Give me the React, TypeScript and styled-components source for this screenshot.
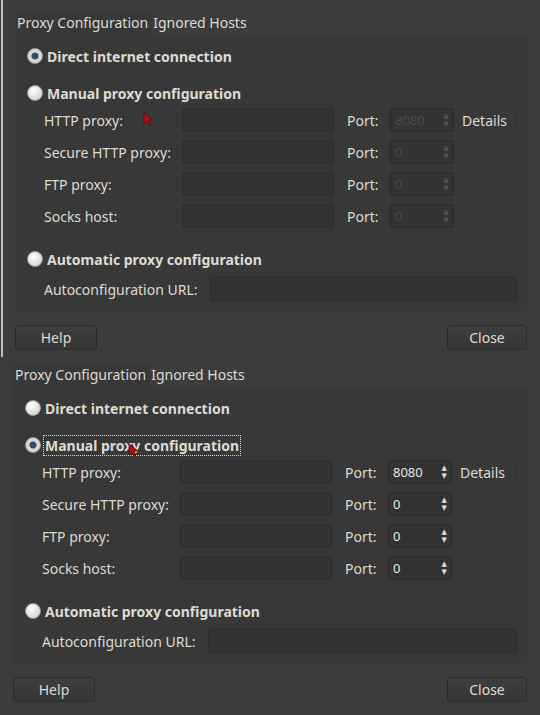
import React from "react";
import styled, { createGlobalStyle } from "styled-components";

const Global = createGlobalStyle`
  html, body { margin: 0; background: #3c3c3c; }
  body { font-family: "Noto Sans", "DejaVu Sans", sans-serif; font-size: 14px; color: #dfdbd2; }
`;

const Page = styled.div`
  width: 540px;
  height: 715px;
  display: flex;
  flex-direction: column;
  overflow: hidden;
`;

const Dialog = styled.div<{ shift: number; top: number; edge?: boolean }>`
  height: 357px;
  box-sizing: border-box;
  padding: ${(p) => p.top}px 13px 0 ${(p) => 15 + p.shift}px;
  border-left: ${(p) => (p.edge ? "2px solid #bdbdbd" : "none")};
  margin-left: ${(p) => (p.edge ? 1 : 0)}px;
  display: flex;
  flex-direction: column;
  background: #3c3c3c;
  & + & { height: 358px; }
`;

const Tabs = styled.div`
  display: flex;
  height: 23px;
`;

const Tab = styled.div<{ active?: boolean }>`
  padding: 0 3px 0 2px;
  line-height: 22px;
  background: ${(p) => (p.active ? "#383838" : "transparent")};
  border-radius: 3px 3px 0 0;
  white-space: nowrap;
`;

const Panel = styled.div`
  background: #383838;
  height: 276px;
  box-sizing: border-box;
  padding: 10px 10px 0 12px;
  display: flex;
  flex-direction: column;
`;

const Option = styled.div<{ gapTop: number; focus?: boolean }>`
  display: flex;
  align-items: center;
  gap: 3px;
  margin-top: ${(p) => p.gapTop}px;
  height: 22px;
  font-weight: bold;
  span {
    position: relative;
    outline: ${(p) => (p.focus ? "1px dotted #dfdbd2" : "none")};
    padding: 0 1px;
  }
`;

const Radio = styled.div<{ checked?: boolean }>`
  width: 14px;
  height: 14px;
  border-radius: 50%;
  background: ${(p) =>
    p.checked
      ? "radial-gradient(circle, #2d4d6e 0 3px, #d8d8d8 4px)"
      : "radial-gradient(circle at 40% 35%, #ffffff, #c8c8c8)"};
  border: 1px solid #9a9a9a;
`;

const Row = styled.div`
  display: grid;
  grid-template-columns: 138px 152px 45px 64px auto;
  align-items: center;
  height: 32px;
  padding-left: 17px;
`;

const Input = styled.div`
  height: 24px;
  background: #333;
  border: 1px solid #2d2d2d;
  border-radius: 2px;
  box-sizing: border-box;
`;

const PortLabel = styled.div`
  padding-left: 13px;
`;

const Spin = styled.div<{ disabled?: boolean }>`
  height: 24px;
  width: 64px;
  margin-left: 11px;
  box-sizing: border-box;
  border: 1px solid #2a2a2a;
  background: #333;
  border-radius: 2px;
  display: flex;
  align-items: center;
  justify-content: space-between;
  padding: 0 4px;
  color: ${(p) => (p.disabled ? "#4a4a4a" : "#e8e8e8")};
  font-size: 13px;
  small { font-size: 7px; line-height: 8px; display: flex; flex-direction: column; color: ${(p) => (p.disabled ? "#555" : "#ddd")}; }
`;

const DetailsBtn = styled.div`
  margin-left: 15px;
  padding: 2px 3px;
  border: 1px solid #333;
  border-radius: 2px;
`;

const AutoRow = styled.div`
  display: flex;
  align-items: center;
  gap: 13px;
  padding-left: 17px;
  margin-top: 6px;
  height: 26px;
  div { flex: 1; }
`;

const Buttons = styled.div`
  display: flex;
  justify-content: space-between;
  margin-top: 14px;
`;

const Button = styled.div<{ w: number }>`
  width: ${(p) => p.w}px;
  height: 23px;
  line-height: 23px;
  text-align: center;
  background: linear-gradient(#3e3e3e, #353535);
  border: 1px solid #2c2c2c;
  border-radius: 3px;
`;

const CursorIcon = styled.svg<{ over?: boolean }>`
  position: ${(p) => (p.over ? "absolute" : "static")};
  left: 84px;
  top: 7px;
  margin-left: ${(p) => (p.over ? 0 : 20)}px;
`;

const Cursor = ({ over }: { over?: boolean }) => (
  <CursorIcon over={over} width="10" height="14" viewBox="0 0 10 14">
    <path d="M1 1 L1 12 L4 9 L6 13 L8 12 L6 8 L10 8 Z" fill="#b01010" stroke="#500" strokeWidth="0.7" />
  </CursorIcon>
);

const rows = ["HTTP proxy:", "Secure HTTP proxy:", "FTP proxy:", "Socks host:"];

const ProxyDialog = ({ manual, shift, top, edge }: { manual: boolean; shift: number; top: number; edge?: boolean }) => (
  <Dialog shift={shift} top={top} edge={edge}>
    <Tabs>
      <Tab active>Proxy Configuration</Tab>
      <Tab>Ignored Hosts</Tab>
    </Tabs>
    <Panel>
      <Option gapTop={0}>
        <Radio checked={!manual} />
        <span>Direct internet connection</span>
      </Option>
      <Option gapTop={15} focus={manual}>
        <Radio checked={manual} />
        <span>
          Manual proxy configuration
          {manual && <Cursor over />}
        </span>
      </Option>
      {rows.map((r, i) => (
        <Row key={r}>
          <div>
            {r}
            {!manual && i === 0 && <Cursor />}
          </div>
          <Input />
          <PortLabel>Port:</PortLabel>
          <Spin disabled={!manual}>
            {i === 0 ? "8080" : "0"}
            <small>
              <span>▲</span>
              <span>▼</span>
            </small>
          </Spin>
          {i === 0 ? <DetailsBtn>Details</DetailsBtn> : <div />}
        </Row>
      ))}
      <Option gapTop={16}>
        <Radio />
        <span>Automatic proxy configuration</span>
      </Option>
      <AutoRow>
        Autoconfiguration URL:
        <Input />
      </AutoRow>
    </Panel>
    <Buttons>
      <Button w={80}>Help</Button>
      <Button w={78}>Close</Button>
    </Buttons>
  </Dialog>
);

export default function App() {
  return (
    <Page>
      <Global />
      <ProxyDialog manual={false} shift={-3} top={12} edge />
      <ProxyDialog manual shift={-2} top={7} />
    </Page>
  );
}
